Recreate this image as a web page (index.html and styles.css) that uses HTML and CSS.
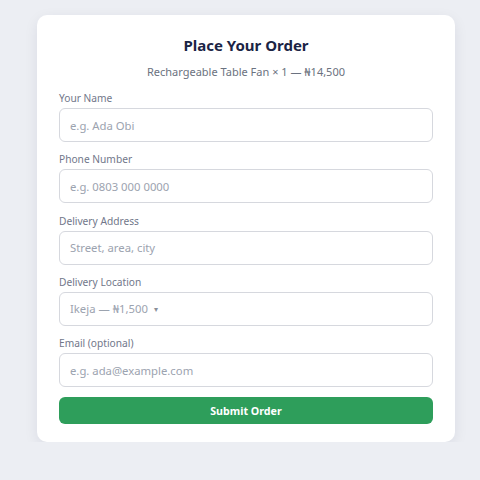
FILE: index.html
```html
<!DOCTYPE html>
<html>
<head>
<meta charset="utf-8">
<link rel="stylesheet" href="styles.css">
</head>
<body>
<div class="card">
  <h1 class="title">Place Your Order</h1>
  <p class="subtitle">Rechargeable Table Fan × 1 — ₦14,500</p>
  <div class="field">
    <label class="label">Your Name</label>
    <div class="input">e.g. Ada Obi</div>
  </div>
  <div class="field">
    <label class="label">Phone Number</label>
    <div class="input">e.g. 0803 000 0000</div>
  </div>
  <div class="field">
    <label class="label">Delivery Address</label>
    <div class="input">Street, area, city</div>
  </div>
  <div class="field">
    <label class="label">Delivery Location</label>
    <div class="input select">Ikeja — ₦1,500 <span class="caret">▾</span></div>
  </div>
  <div class="field">
    <label class="label">Email (optional)</label>
    <div class="input">e.g. ada@example.com</div>
  </div>
  <div class="button">Submit Order</div>
</div>
</body>
</html>
```
FILE: styles.css
```css
html, body {
  margin: 0;
  padding: 0;
  background: #eceef3;
  font-family: "Noto Sans", sans-serif;
}
body {
  padding: 15px 0 0 37px;
}
.card {
  width: 374px;
  background: #ffffff;
  border-radius: 10px;
  box-shadow: 0 4px 14px rgba(20, 30, 60, 0.08);
  padding: 21px 22px 18px 22px;
}
.title {
  margin: 0;
  text-align: center;
  font-size: 15px;
  font-weight: 700;
  color: #1b2445;
  line-height: 18px;
}
.subtitle {
  margin: 10px 0 11px 0;
  text-align: center;
  font-size: 11px;
  color: #6b7280;
  line-height: 16px;
}
.field {
  display: flex;
  flex-direction: column;
}
.field + .field {
  margin-top: 10.25px;
}
.label {
  font-size: 10.2px;
  color: #71778a;
  line-height: 14px;
  margin-bottom: 3px;
}
.input {
  box-sizing: border-box;
  height: 34px;
  border: 1px solid #d6d8de;
  border-radius: 6px;
  padding: 0 10px;
  display: flex;
  align-items: center;
  font-size: 11.3px;
  color: #9ca3af;
}
.caret {
  font-size: 8px;
  margin-left: 6px;
  color: #8a8f99;
}
.button {
  margin-top: 10px;
  height: 27px;
  border-radius: 6px;
  background: #2e9e5b;
  color: #ffffff;
  font-size: 10.7px;
  font-weight: 700;
  display: flex;
  align-items: center;
  justify-content: center;
}
```
